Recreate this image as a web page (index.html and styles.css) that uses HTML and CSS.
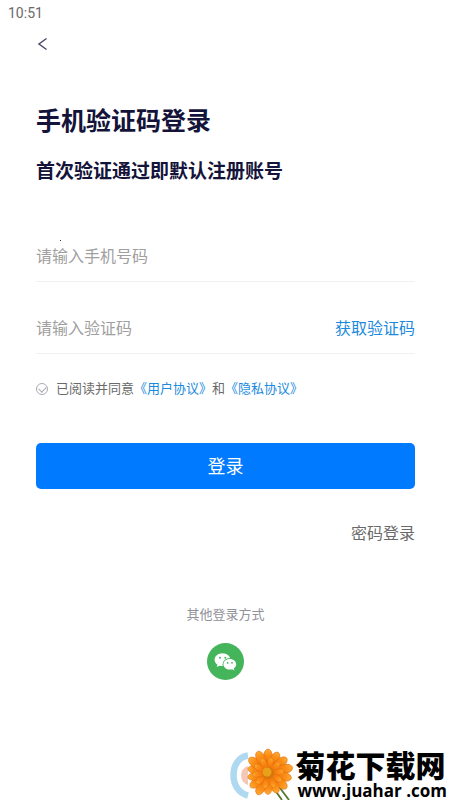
FILE: index.html
```html
<!DOCTYPE html>
<html lang="zh-CN">
<head>
    <meta charset="UTF-8">
    <meta name="viewport" content="width=device-width, initial-scale=1.0">
    <title>手机验证码登录</title>
    <link rel="stylesheet" href="styles.css">
</head>
<body>
    <div class="status-bar">10:51</div>

    <header class="nav">
        <button type="button" class="back-btn" aria-label="返回">
            <svg width="14" height="14" viewBox="0 0 14 14">
                <path d="M10.500 1.500L3 7L10.500 12.500" fill="none" stroke="#4b4b66" stroke-width="1.500"/>
            </svg>
        </button>
    </header>

    <main class="login">
        <h1>手机验证码登录</h1>
        <h2>首次验证通过即默认注册账号</h2>

        <form class="login-form">
            <div class="form-group">
                <input type="tel" id="phone" placeholder="请输入手机号码" aria-label="手机号码">
                <span class="dot"></span>
            </div>
            <div class="form-group">
                <input type="text" id="code" placeholder="请输入验证码" aria-label="验证码">
                <button type="button" class="code-btn">获取验证码</button>
            </div>

            <div class="agreement">
                <input type="checkbox" id="agree">
                <label for="agree">已阅读并同意</label><a href="#">《用户协议》</a><span>和</span><a href="#">《隐私协议》</a>
            </div>

            <button type="submit" class="login-btn">登录</button>
        </form>

        <a class="password-link" href="#">密码登录</a>

        <!-- Other login methods -->
        <section class="other-login">
            <p>其他登录方式</p>
            <button type="button" class="wechat-btn" aria-label="微信登录">
                <svg width="37" height="37" viewBox="0 0 37 37">
                    <circle cx="18.5" cy="18.5" r="18.5" fill="#45b55b"/>
                    <path d="M15.600 10.200c-4.500 0-8 2.900-8 6.500 0 2.100 1.100 3.800 2.900 5l-.8 2.400 2.900-1.400c1 .3 1.900.4 3 .4 4.400 0 7.900-2.900 7.900-6.400s-3.500-6.500-7.900-6.500z" fill="#fff"/>
                    <ellipse cx="22.800" cy="21.300" rx="7.300" ry="6.200" fill="#45b55b"/>
                    <path d="M22.800 15.900c-3.600 0-6.400 2.400-6.400 5.400s2.800 5.300 6.400 5.300c.8 0 1.600-.1 2.300-.3l2.400 1.200-.7-2c1.500-1 2.400-2.500 2.400-4.200 0-3-2.800-5.400-6.400-5.400z" fill="#fff"/>
                    <g fill="#45b55b">
                        <circle cx="13" cy="14.700" r="1"/>
                        <circle cx="18.300" cy="14.700" r="1"/>
                        <circle cx="20.700" cy="19.800" r=".9"/>
                        <circle cx="25" cy="19.800" r=".9"/>
                    </g>
                </svg>
            </button>
        </section>
    </main>

    <!-- Site mark over the bottom corner -->
    <div class="site-mark">
        <svg class="flower" width="66" height="52" viewBox="0 0 66 52">
            <defs>
                <radialGradient id="petal" gradientUnits="userSpaceOnUse" cx="0" cy="0" r="24">
                    <stop offset="0" stop-color="#d96808"/>
                    <stop offset=".4" stop-color="#f4780c"/>
                    <stop offset=".75" stop-color="#fb8f17"/>
                    <stop offset="1" stop-color="#ffac35"/>
                </radialGradient>
                <path id="p" d="M0 0C-4-6-6-17-3-22Q0-26 3-22C6-17 4-6 0 0z" fill="url(#petal)" stroke="#d8640a" stroke-width=".5"/>
            </defs>
            <path d="M19 7.500C9 9 4.500 18 4.500 27S9 45 19 47.500" fill="none" stroke="#aed9f1" stroke-width="6.500"/>
            <path d="M19 18A10 10 0 0 0 19 37z" fill="#f5c7b5"/>
            <path d="M43 38L53 52M48 36L60 52" fill="none" stroke="#58752e" stroke-width="1.800"/>
            <g transform="translate(39 25)">
                <circle r="15" fill="#ee760d"/>
                <use href="#p"/>
                <use href="#p" transform="rotate(26) scale(.96)"/>
                <use href="#p" transform="rotate(51)"/>
                <use href="#p" transform="rotate(77) scale(1.050)"/>
                <use href="#p" transform="rotate(103)"/>
                <use href="#p" transform="rotate(129)"/>
                <use href="#p" transform="rotate(154) scale(.92)"/>
                <use href="#p" transform="rotate(180) scale(.9)"/>
                <use href="#p" transform="rotate(206)"/>
                <use href="#p" transform="rotate(231) scale(.94)"/>
                <use href="#p" transform="rotate(257) scale(.86)"/>
                <use href="#p" transform="rotate(283) scale(.86)"/>
                <use href="#p" transform="rotate(308)"/>
                <use href="#p" transform="rotate(334)"/>
                <g transform="rotate(12) scale(.65)">
                    <use href="#p"/>
                    <use href="#p" transform="rotate(36)"/>
                    <use href="#p" transform="rotate(72)"/>
                    <use href="#p" transform="rotate(108)"/>
                    <use href="#p" transform="rotate(144)"/>
                    <use href="#p" transform="rotate(180)"/>
                    <use href="#p" transform="rotate(216)"/>
                    <use href="#p" transform="rotate(252)"/>
                    <use href="#p" transform="rotate(288)"/>
                    <use href="#p" transform="rotate(324)"/>
                </g>
                <circle r="6" fill="#d5780b"/>
                <circle cx="-1" cy="-1" r="4.500" fill="#eba01c"/>
            </g>
        </svg>
        <div class="site-text">
            <div class="site-name">菊花下载网</div>
            <div class="site-url">www.juahar .com</div>
        </div>
    </div>
</body>
</html>
```

FILE: styles.css
```css
* {
    box-sizing: border-box;
    margin: 0;
    padding: 0;
}

body {
    font-family: Roboto, 'Noto Sans CJK SC', sans-serif;
    background-color: #fff;
    color: #6a6a6a;
    min-height: 100vh;
    position: relative;
    overflow-x: hidden;
}

input, button {
    font-family: inherit;
    border: none;
    background: none;
    outline: none;
}

button {
    cursor: pointer;
}

a {
    color: #1c8ade;
    text-decoration: none;
}

/* Top */
.status-bar {
    height: 26px;
    padding-left: 8px;
    font-size: 14px;
    line-height: 26px;
}

.nav {
    height: 36px;
    padding-left: 36px;
    display: flex;
    align-items: center;
}

.back-btn {
    width: 14px;
    height: 14px;
}

.back-btn svg, .wechat-btn svg, .flower {
    display: block;
}

/* Login */
.login {
    padding: 42px 35px 0 36px;
    display: flex;
    flex-direction: column;
}

h1, h2 {
    color: #14143a;
    font-weight: 700;
}

h1 {
    font-size: 25px;
    line-height: 36px;
}

h2 {
    margin-top: 18px;
    font-size: 19px;
    line-height: 28px;
}

.login-form {
    margin-top: 24px;
    display: flex;
    flex-direction: column;
}

.form-group {
    position: relative;
    height: 72px;
    padding-top: 20px;
    border-bottom: 1px solid #f0f0f0;
    display: flex;
    align-items: center;
    font-size: 16px;
}

.form-group input {
    flex: 1;
    min-width: 0;
    height: 50px;
    padding-top: 2px;
    font-size: 16px;
    color: #333;
}

.form-group input::placeholder {
    color: #a0a0a0;
}

.dot {
    position: absolute;
    left: 24px;
    top: 30px;
    width: 1px;
    height: 1px;
    background-color: #333;
}

.code-btn {
    padding-bottom: 2px;
    font-size: 16px;
    color: #1c8ade;
}

.agreement {
    margin-top: 25px;
    display: flex;
    align-items: center;
    font-size: 13px;
    line-height: 20px;
}

.agreement input {
    appearance: none;
    position: relative;
    width: 12px;
    height: 12px;
    margin-right: 8px;
    border: 1px solid #aaaab4;
    border-radius: 50%;
}

.agreement input::after {
    content: '';
    position: absolute;
    left: 2px;
    top: 2px;
    width: 6px;
    height: 4px;
    border-left: 1px solid #aaaab4;
    border-bottom: 1px solid #aaaab4;
    transform: rotate(-45deg);
}

.login-btn {
    height: 46px;
    margin-top: 44px;
    padding-bottom: 2px;
    border-radius: 5px;
    background-color: #007aff;
    color: #fff;
    font-size: 18px;
}

.password-link {
    align-self: flex-end;
    margin-top: 33px;
    font-size: 16px;
    line-height: 24px;
    color: #6a6a6a;
}

.other-login {
    margin-top: 59px;
    display: flex;
    flex-direction: column;
    align-items: center;
    gap: 18px;
    font-size: 13px;
    line-height: 20px;
    color: #919199;
}

.wechat-btn {
    width: 37px;
    height: 37px;
}

/* Site mark */
.site-mark {
    position: absolute;
    right: 3px;
    bottom: 0;
    display: flex;
    align-items: flex-end;
    color: #000;
}

.site-text {
    white-space: nowrap;
}

.site-name {
    font-family: 'Noto Sans CJK SC', sans-serif;
    font-size: 30px;
    font-weight: 900;
    line-height: 36px;
}

.site-url {
    padding-left: 2px;
    font-family: 'Open Sans', sans-serif;
    font-size: 17px;
    font-weight: 700;
    line-height: 18px;
}
```
